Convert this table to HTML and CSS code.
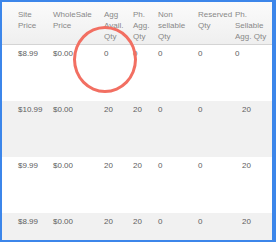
FILE: index.html
```html
<!DOCTYPE html>
<html>
<head>
<meta charset="utf-8">
<link rel="stylesheet" href="styles.css">
</head>
<body>
<div class="frame">
  <div class="row head">
    <div>Site<br>Price</div>
    <div>WholeSale<br>Price</div>
    <div>Agg<br>Avail.<br>Qty</div>
    <div>Ph.<br>Agg.<br>Qty</div>
    <div>Non<br>sellable<br>Qty</div>
    <div>Reserved<br>Qty</div>
    <div>Ph.<br>Sellable<br>Agg. Qty</div>
  </div>
  <div class="row">
    <div>$8.99</div><div>$0.00</div><div>0</div><div>0</div><div>0</div><div>0</div><div>0</div>
  </div>
  <div class="row alt">
    <div>$10.99</div><div>$0.00</div><div>20</div><div>20</div><div>0</div><div>0</div><div class="shift">20</div>
  </div>
  <div class="row">
    <div>$9.99</div><div>$0.00</div><div>20</div><div>20</div><div>0</div><div>0</div><div class="shift">20</div>
  </div>
  <div class="row alt">
    <div>$8.99</div><div>$0.00</div><div>20</div><div>20</div><div>0</div><div>0</div><div class="shift">20</div>
  </div>
  <div class="circle"></div>
</div>
</body>
</html>
```

FILE: styles.css
```css
html, body {
  margin: 0;
  padding: 0;
  background: #ffffff;
}
.frame {
  position: relative;
  box-sizing: border-box;
  width: 276px;
  height: 242px;
  border-style: solid;
  border-color: #3c86ea;
  border-width: 2px 4px 2px 2px;
  overflow: hidden;
  background: #ffffff;
  font-family: "Liberation Sans", Arial, sans-serif;
  font-size: 8px;
  line-height: 11px;
}
.row {
  display: grid;
  grid-template-columns: 35px 51px 29px 25px 40px 37px 1fr;
  padding-left: 16px;
  height: 56px;
  box-sizing: border-box;
  padding-top: 3px;
  color: #606060;
  white-space: nowrap;
}
.row.head {
  height: 43px;
  padding-top: 7px;
  color: #888888;
  background: linear-gradient(#fbfbfb, #efefef);
  border-bottom: 1px solid #d4d4d4;
}
.row.alt {
  background: #f1f1f1;
}
.shift {
  padding-left: 7px;
}
.circle {
  position: absolute;
  left: 71px;
  top: 24px;
  width: 64px;
  height: 67px;
  box-sizing: border-box;
  border: 3px solid #f26f62;
  border-radius: 50%;
}
```
